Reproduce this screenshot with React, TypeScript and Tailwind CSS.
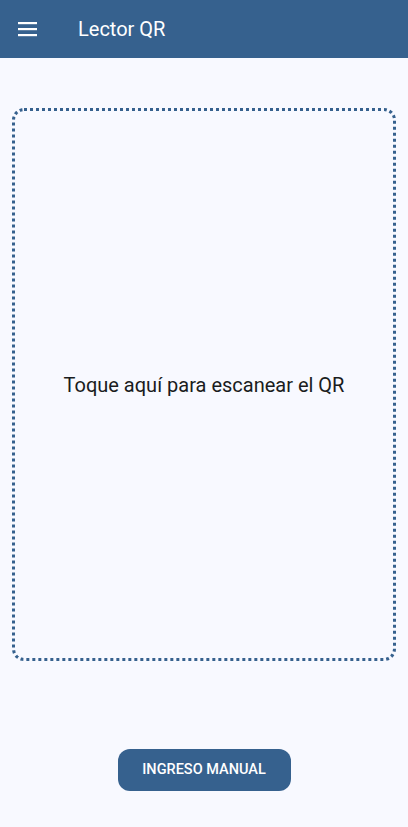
import React from "react";

export default function App() {
  return (
    <div className="flex min-h-[827px] flex-col bg-[#f8f9ff] font-['Roboto',sans-serif]">
      <header className="flex h-[58px] items-center bg-[#36618e] px-4 text-white">
        <button aria-label="Menú" className="flex h-6 w-6 items-center justify-center">
          <svg width="22" height="16" viewBox="0 0 22 16" fill="none">
            <rect x="1" y="1" width="19" height="2.2" fill="white" />
            <rect x="1" y="7" width="19" height="2.2" fill="white" />
            <rect x="1" y="13" width="19" height="2.2" fill="white" />
          </svg>
        </button>
        <h1 className="ml-[38px] text-[20px] leading-none">Lector QR</h1>
      </header>

      <main className="flex flex-1 flex-col px-3 pt-[50px]">
        <button className="flex h-[553px] w-full items-center justify-center rounded-[12px] border-[3px] border-dotted border-[#36618e]">
          <span className="text-[20px] text-[#1a1c20]">Toque aquí para escanear el QR</span>
        </button>

        <div className="flex justify-center pt-[88px]">
          <button className="h-[42px] w-[173px] rounded-[12px] bg-[#36618e] text-[14.5px] font-medium text-white">
            INGRESO MANUAL
          </button>
        </div>
      </main>
    </div>
  );
}
